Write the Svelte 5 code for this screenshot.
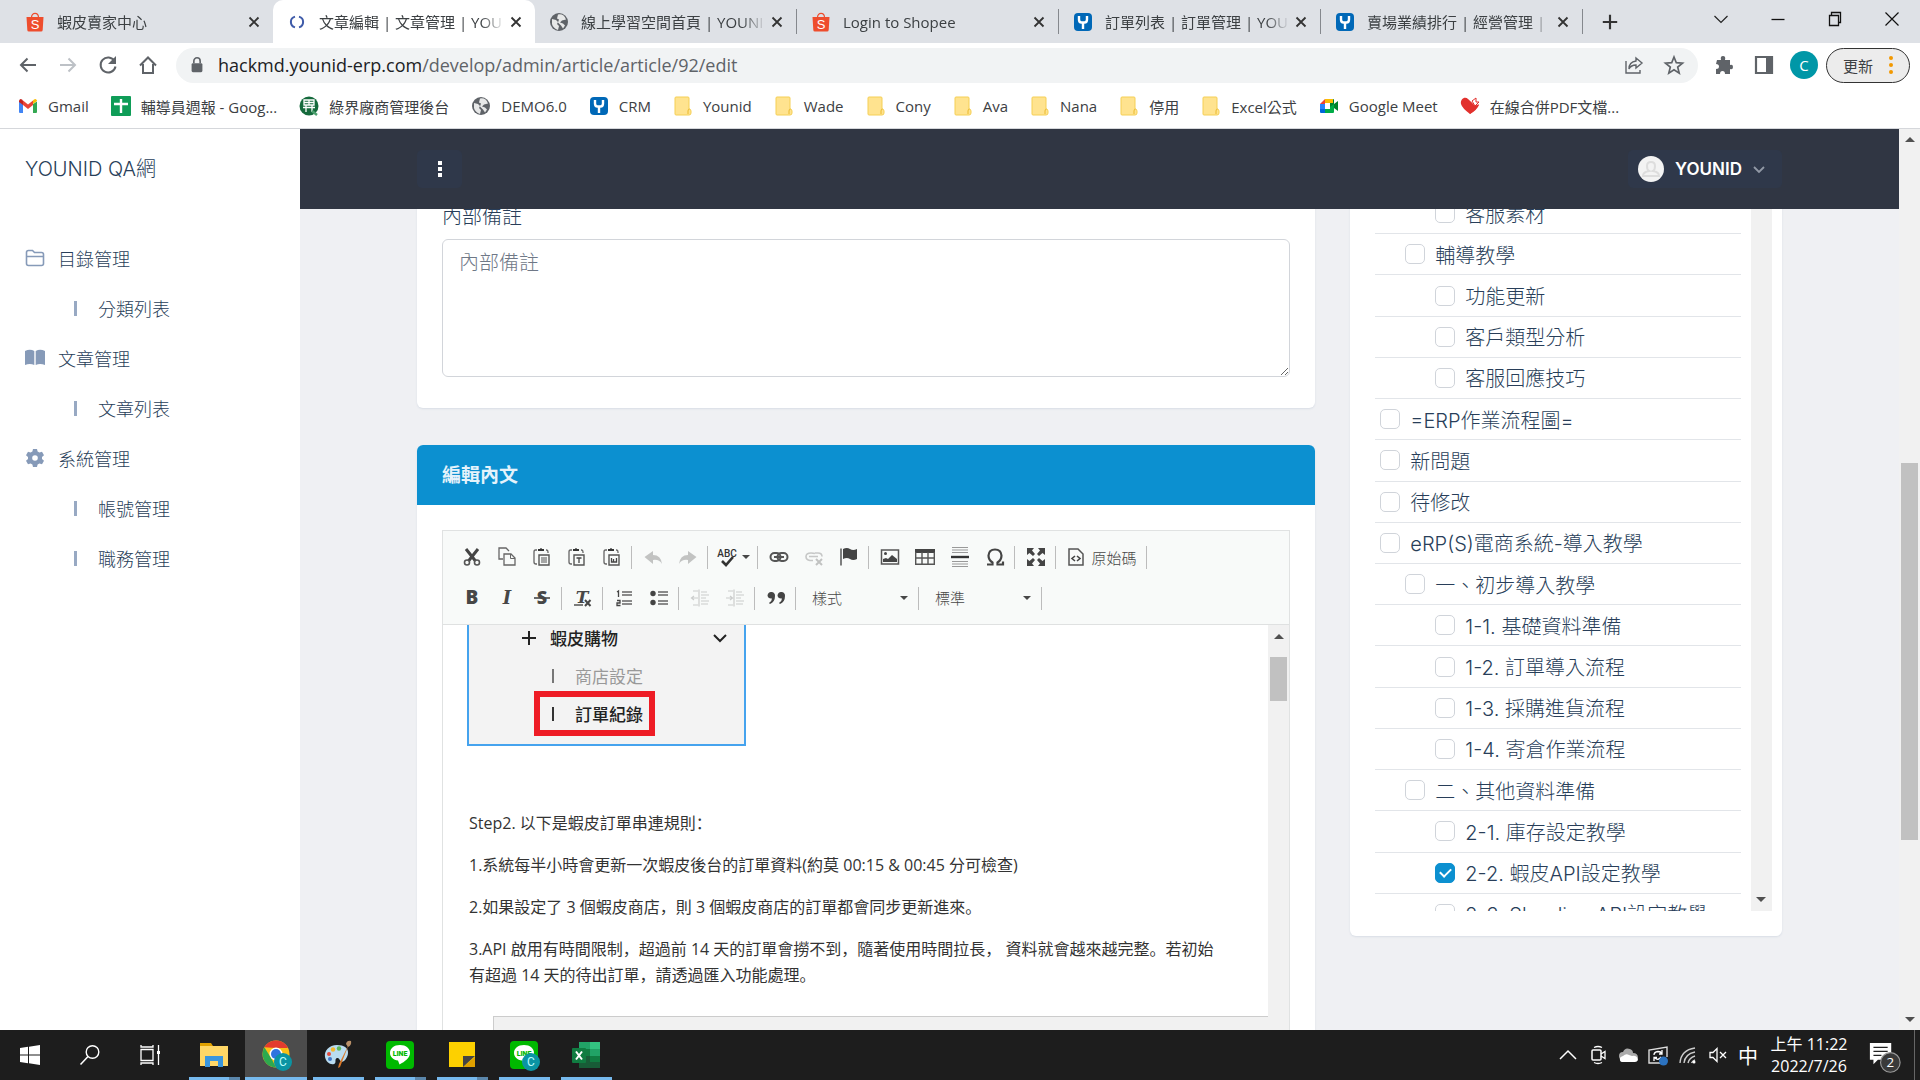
<script lang="ts">
	type Tab = { icon: string; title: string; active?: boolean };
	type TreeItem = { level: number; name: string; checked?: boolean };

	var tabs: Tab[] = [
		{ icon: "shopee", title: "蝦皮賣家中心" },
		{ icon: "loading", title: "文章編輯 | 文章管理 | YOU", active: true },
		{ icon: "globe", title: "線上學習空間首頁 | YOUNI" },
		{ icon: "shopee", title: "Login to Shopee" },
		{ icon: "younid", title: "訂單列表 | 訂單管理 | YOU" },
		{ icon: "younid", title: "賣場業績排行 | 經營管理 | " }
	];

	var bookmarks = [
		{ icon: "gmail", name: "Gmail" },
		{ icon: "sheets", name: "輔導員週報 - Goog..." },
		{ icon: "ecpay", name: "綠界廠商管理後台" },
		{ icon: "globe", name: "DEMO6.0" },
		{ icon: "younid", name: "CRM" },
		{ icon: "folder", name: "Younid" },
		{ icon: "folder", name: "Wade" },
		{ icon: "folder", name: "Cony" },
		{ icon: "folder", name: "Ava" },
		{ icon: "folder", name: "Nana" },
		{ icon: "folder", name: "停用" },
		{ icon: "folder", name: "Excel公式" },
		{ icon: "meet", name: "Google Meet" },
		{ icon: "heart", name: "在線合併PDF文檔..." }
	];

	var menu = [
		{ icon: "menuFolder", name: "目錄管理", children: ["分類列表"] },
		{ icon: "menuBook", name: "文章管理", children: ["文章列表"] },
		{ icon: "menuGear", name: "系統管理", children: ["帳號管理", "職務管理"] }
	];

	var tree: TreeItem[] = [
		{ level: 2, name: "客服素材" },
		{ level: 1, name: "輔導教學" },
		{ level: 2, name: "功能更新" },
		{ level: 2, name: "客戶類型分析" },
		{ level: 2, name: "客服回應技巧" },
		{ level: 0, name: "=ERP作業流程圖=" },
		{ level: 0, name: "新問題" },
		{ level: 0, name: "待修改" },
		{ level: 0, name: "eRP(S)電商系統-導入教學" },
		{ level: 1, name: "一、初步導入教學" },
		{ level: 2, name: "1-1. 基礎資料準備" },
		{ level: 2, name: "1-2. 訂單導入流程" },
		{ level: 2, name: "1-3. 採購進貨流程" },
		{ level: 2, name: "1-4. 寄倉作業流程" },
		{ level: 1, name: "二、其他資料準備" },
		{ level: 2, name: "2-1. 庫存設定教學" },
		{ level: 2, name: "2-2. 蝦皮API設定教學", checked: true },
		{ level: 2, name: "2-3. Shopline API設定教學" }
	];

	var toolsTop = [
		["cut", "copy", "paste", "pasteText", "pasteWord"],
		["undo", "redo"],
		["spell"],
		["link", "unlink", "anchor"],
		["image", "table", "rule", "omega"],
		["maximize"],
		["source"]
	];
	var toolsBottom = [
		["bold", "italic", "strike"],
		["clear"],
		["numbered", "bulleted"],
		["outdent", "indent"],
		["quote"]
	];
	var disabledTools = ["undo", "redo", "unlink", "outdent", "indent"];

	var apps = [
		{ icon: "explorer", name: "檔案總管", stacked: true },
		{ icon: "chrome", name: "Chrome", active: true },
		{ icon: "paint", name: "小畫家" },
		{ icon: "line", name: "LINE", stacked: true },
		{ icon: "notes", name: "自黏便箋", stacked: true },
		{ icon: "lineBadge", name: "LINE C" },
		{ icon: "excel", name: "Excel" }
	];
	var tray = ["trayUp", "trayCam", "trayCloud", "traySync", "trayWifi", "trayMute"];

	var clipboard = '<path d="M5 3H3.500Q2 3 2 5v10q0 2 2 2h1M14 3h.5Q16 3 16 5v1" fill="none" stroke="#666" stroke-width="1.300"/><path d="M6 4V2h2q1-2 2 0h2v2z" fill="#333"/><path d="M7 8h10v10H7z" fill="none" stroke="#555" stroke-width="1.400"/>';
	var lineLogo = '<rect x="1" y="1" width="28" height="28" rx="4" fill="#00b900"/><path d="M15 5C9 5 5 8.500 5 13c0 4 3.500 7 8 7.600l1.500 3.900C20 21.500 25 18 25 13c0-4.500-4-8-10-8z" fill="#fff"/><text x="15" y="16" font-family="Roboto, sans-serif" font-size="7" font-weight="900" text-anchor="middle" fill="#00b900">LINE</text>';
	var badge = '<circle cx="22" cy="22" r="9" fill="#0b94a3"/><text x="22" y="26" font-family="Roboto, sans-serif" font-size="12" text-anchor="middle" fill="#bff">C</text>';

	// inner markup of every icon, drawn on a 20 unit grid unless sized otherwise
	var icons: Record<string, string> = {
		shopee: '<path d="M6.500 5.500C6.500 0 13.500 0 13.500 5.500" fill="none" stroke="#ee4d2d" stroke-width="1.200"/><path d="M1.500 5h17l-.8 13q-.1 1.500-1.600 1.500H3.900q-1.500 0-1.600-1.500z" fill="#ee4d2d"/><text x="10" y="17" font-family="Liberation Sans, sans-serif" font-size="13" text-anchor="middle" fill="#fff">S</text>',
		loading: '<path d="M8 4.600A5.600 5.600 0 0 0 8 15.400M12 4.600a5.600 5.600 0 0 1 0 10.800" fill="none" stroke="#3f5ba9" stroke-width="2"/>',
		globe: '<circle cx="10" cy="10" r="9" fill="#5f6368"/><path d="M3 7l4 1 2 2-1 2 2 2-1 4q-5-2-6-6zM9 2.500q6-1 8 5l-4 1-2 2 3 1 2 2-2 3-2-3-3-3 1-3-2-1z" fill="#fff" opacity=".85"/>',
		younid: '<rect x="1" y="1" width="18" height="18" rx="4" fill="#0068b7"/><path d="M6 4v3.500q0 3 2.500 3h3q2.500 0 2.500-3V4M10 10v7" fill="none" stroke="#fff" stroke-width="2.400"/>',
		gmail: '<path d="M1 5.500V16q0 1 1 1h3V8z" fill="#4285f4"/><path d="M19 5.500V16q0 1-1 1h-3V8z" fill="#34a853"/><path d="M15 8l4-3V4.500q-1-2.500-3-1L15 4.500z" fill="#fbbc04"/><path d="M1 4.500V6l4 3V4.500l-1-1q-2-1.500-3 1z" fill="#c5221f"/><path d="M5 4.500l5 4 5-4V9l-5 4-5-4z" fill="#ea4335"/>',
		sheets: '<rect width="20" height="20" rx="1" fill="#0f9d58"/><path d="M10 3v14M3 8h14" stroke="#fff" stroke-width="2.400"/>',
		ecpay: '<circle cx="10" cy="10" r="9.500" fill="#156a3c"/><path d="M5 4h10v5H5zM10 4v5M5 6.500h10M4 11.500h12M7 9v7M13 9v7" fill="none" stroke="#fff" stroke-width="1.300"/><path d="M13 15l5 4" stroke="#4ca06e" stroke-width="2.500"/>',
		folder: '<path d="M2 2q0-1 1-1h12q1 0 1 1v11q2 0 2 2v2q0 2-2 2H3q-1 0-1-1z" fill="#ffe38f" stroke="#f5cf55"/><path d="M15 18v-3q0-2 1.500-2" fill="none" stroke="#eab92c"/>',
		meet: '<path d="M6 3h8v4h-4v3H6z" fill="#fbbc04"/><path d="M6 3L1 8h5z" fill="#ea4335"/><path d="M1 8h5v5H1z" fill="#2684fc"/><path d="M1 13h5v4H2q-1 0-1-1z" fill="#0066da"/><path d="M6 13h5v-3l4-3v9q0 1-1 1H6z" fill="#00ac47"/><path d="M14 3q1 0 1 1v4l4-3v10l-4-3V8l-4 3V7h3z" fill="#00832d"/><path d="M6 7h5v6H6z" fill="#fff"/>',
		heart: '<path d="M10 18Q2 12 1 8C0 3 5 0 8 3l2 2 5 5 4-2q-1 4-9 10z" fill="#e2312d"/><path d="M12 5l4-3v4h3l-4 4z" fill="#fff" stroke="#e2312d"/><path d="M6 2l5 4 4 4 4-1q-2 5-9 9z" fill="#e2312d"/>',
		back: '<path d="M18 10H3M9.500 3.500L3 10l6.500 6.500" fill="none" stroke="#5f6368" stroke-width="2"/>',
		forward: '<path d="M2 10h15M10.500 3.500L17 10l-6.500 6.500" fill="none" stroke="#bdc1c6" stroke-width="2"/>',
		reload: '<path d="M16.500 6A7.500 7.500 0 1 0 17.500 11.500" fill="none" stroke="#5f6368" stroke-width="2"/><path d="M18 1v8h-8z" fill="#5f6368"/>',
		home: '<path d="M5 9v9h10V9M2 10.500L10 2.500l8 8" fill="none" stroke="#5f6368" stroke-width="2"/>',
		lock: '<rect x="4" y="8" width="12" height="10" rx="1.500" fill="#5f6368"/><path d="M6.500 8V5.500a3.500 3.500 0 0 1 7 0V8" fill="none" stroke="#5f6368" stroke-width="1.800"/>',
		share: '<path d="M2 6v12h14v-3M12 3l6 5-6 5v-3q-5 0-7 4 0-7 7-8z" fill="none" stroke="#5f6368" stroke-width="1.400"/>',
		star: '<path d="M10 2l2.300 5.700 6.200.4-4.800 4 1.500 6L10 14.800 4.800 18.100l1.500-6-4.800-4 6.200-.4z" fill="none" stroke="#5f6368" stroke-width="1.700"/>',
		puzzle: '<path d="M3 5h4q-1-4 2-4t2 4h5v5q3-1 3 2t-3 2v5h-5q0-3-2.500-3T6 19H2v-5q3 0 3-2.500T2 9z" fill="#5f6368"/>',
		panel: '<path d="M2 2h16v16H2z" fill="none" stroke="#5f6368" stroke-width="2.200"/><path d="M12 2h6v16h-6z" fill="#5f6368"/>',
		winDown: '<path d="M3.500 7l6.500 6.500L16.500 7" fill="none" stroke="#222" stroke-width="1.200"/>',
		winMin: '<path d="M3.500 10.500h13" stroke="#111" stroke-width="1.300"/>',
		winMax: '<path d="M4.500 6.500h9v10h-9zM6.500 6V3.500h9v10H14" fill="none" stroke="#111" stroke-width="1.300"/>',
		winClose: '<path d="M3.500 3.500l13 13M16.500 3.500l-13 13" stroke="#111" stroke-width="1.200"/>',
		close: '<path d="M5 5l10 10M15 5L5 15" stroke="#333" stroke-width="2"/>',
		plus: '<path d="M10 2v16M2 10h16" stroke="#333" stroke-width="2.400"/>',
		menuFolder: '<path d="M1.500 4.500q0-2 2-2h4l2 2h7q2 0 2 2v9q0 2-2 2h-13q-2 0-2-2zM1.500 8.500h17" fill="none" stroke="#869ab8" stroke-width="1.600"/>',
		menuBook: '<path d="M0 3q5-2.500 9.300 0v14Q5 15 0 17zM10.700 3Q15 .5 20 3v14q-5-2-9.300 0z" fill="#869ab8"/>',
		menuGear: '<path d="M8 1h4l.6 2.600 1.800 1 2.600-.8 2 3.400-2 1.800v2l2 1.800-2 3.400-2.600-.8-1.800 1L12 19H8l-.6-2.600-1.800-1-2.600.8-2-3.400 2-1.800V9L1 7.200l2-3.400 2.600.8 1.800-1z" fill="#869ab8"/><circle cx="10" cy="10" r="2.800" fill="#fff"/>',
		cut: '<path d="M4 2l9.500 12M16 2L6.500 14" stroke="#444" stroke-width="3"/><circle cx="5" cy="15.500" r="2.500" fill="none" stroke="#555" stroke-width="1.600"/><circle cx="15" cy="15.500" r="2.500" fill="none" stroke="#555" stroke-width="1.600"/>',
		copy: '<path d="M6 12H2V1h7l3 3M7 7h7l4 4v7H7z" fill="none" stroke="#666" stroke-width="1.300"/><path d="M13.500 7v4.500H18" fill="none" stroke="#666"/>',
		paste: clipboard + '<path d="M9 11h6M9 13h6M9 15h6" stroke="#555"/>',
		pasteText: clipboard + '<path d="M9.500 11h5M12 11v5" stroke="#444" stroke-width="1.300"/>',
		pasteWord: clipboard + '<path d="M9.500 11v4h2v-3 3h3v-4" fill="none" stroke="#444" stroke-width="1.300"/>',
		undo: '<path d="M1.500 10L10 4v4q8 0 9 9-3-5-9-4v4z" fill="#474747"/>',
		redo: '<path d="M18.500 10L10 4v4q-8 0-9 9 3-5 9-4v4z" fill="#474747"/>',
		spell: '<text x="10" y="10" font-family="Roboto, sans-serif" font-size="10" font-weight="500" text-anchor="middle" fill="#333">ABC</text><path d="M5 14l4 4 7-8" fill="none" stroke="#333" stroke-width="2.600"/>',
		link: '<rect x="1.500" y="6" width="10" height="8" rx="4" fill="none" stroke="#555" stroke-width="2"/><rect x="8.500" y="6" width="10" height="8" rx="4" fill="none" stroke="#555" stroke-width="2"/><path d="M5 10h10" stroke="#555" stroke-width="2"/>',
		unlink: '<path d="M11 6.500Q10 6 7 6 2 6 2 9.500T6 13.500h3M5 9.500h9M11 6h3q4 0 4 3.500" fill="none" stroke="#555" stroke-width="1.600"/><path d="M12 12l6 6M18 12l-6 6" stroke="#444" stroke-width="2"/>',
		anchor: '<path d="M2 1.500v17" stroke="#555" stroke-width="1.500"/><path d="M4 2q4-2 7 0t7 0v10q-4 2-7 0t-7 0z" fill="#444"/>',
		image: '<path d="M1.500 3h17v14h-17z" fill="none" stroke="#555" stroke-width="1.500"/><circle cx="5.500" cy="6.500" r="1.500" fill="#444"/><path d="M3 15v-3l3-1 2 1 4-4 5 4v3z" fill="#444"/>',
		table: '<path d="M0 2h20v4H0z" fill="#444"/><path d="M.7 5v12.300h18.600V5M0 11h20M7 5v12M13 5v12" fill="none" stroke="#555" stroke-width="1.400"/>',
		rule: '<path d="M2 .5h16M2 3h16M2 5.500h16M2 14.500h16M2 17h16M2 19.500h16" stroke="#999"/><path d="M1 10h18" stroke="#333" stroke-width="2.400"/>',
		omega: '<path d="M2 17.500h5.500v-2Q3.500 13 3.500 8.500 4 2.500 10 2.500t6.500 6q0 4.500-4 7v2H18v-3" fill="none" stroke="#444" stroke-width="2.200"/>',
		maximize: '<path d="M1 1h7L6 3.500 9 7 7 9 3.500 6 1 8zM19 1v7l-2.500-2L13 9l-2-2 3-3.500L12 1zM1 19v-7l2.500 2L7 11l2 2-3 3.500L8 19zM19 19h-7l2-2.500-3-3.500 2-2 3.500 3 2.500-2z" fill="#444"/>',
		source: '<path d="M3 2h9l5 5v11H3z" fill="none" stroke="#555" stroke-width="1.500"/><path d="M9 9l-3 2.500L9 14M11 9l3 2.500-3 2.500" fill="none" stroke="#444" stroke-width="1.600"/>',
		bold: '<text x="10" y="16" font-family="Open Sans, sans-serif" font-size="19" font-weight="800" text-anchor="middle" fill="#474747">B</text>',
		italic: '<text x="10" y="16" font-family="DejaVu Serif, serif" font-size="18" font-style="italic" font-weight="700" text-anchor="middle" fill="#474747">I</text>',
		strike: '<text x="10" y="16" font-family="Open Sans, sans-serif" font-size="18" font-weight="800" text-anchor="middle" fill="#474747">S</text><path d="M2 10h16" stroke="#474747" stroke-width="1.600"/>',
		clear: '<text x="9" y="15" font-family="DejaVu Serif, serif" font-size="17" font-style="italic" font-weight="700" text-anchor="middle" fill="#474747">T</text><path d="M1 17h9" stroke="#474747" stroke-width="1.400"/><path d="M12 12l5.500 6M17.500 12L12 18" stroke="#474747" stroke-width="2"/>',
		numbered: '<path d="M3 4l1.500-1v6M3 12.500h3v2.500H3v2.500h3.500" fill="none" stroke="#444" stroke-width="1.300"/><path d="M8 4h10M8 7h10M8 13h10M8 16h10" stroke="#666" stroke-width="1.300"/>',
		bulleted: '<circle cx="4" cy="5.500" r="2.700" fill="#444"/><circle cx="4" cy="14.500" r="2.700" fill="#444"/><path d="M9 4h10M9 7h10M9 13h10M9 16h10" stroke="#666" stroke-width="1.300"/>',
		outdent: '<path d="M3 3h5M3 17h5M1 10h7M4 8l-2.500 2L4 12M9 1.500v17M11 4h6M11 7h8M11 10h5M11 13h8M11 16h7" fill="none" stroke="#666" stroke-width="1.200"/>',
		indent: '<path d="M3 3h5M3 17h5M1 10h7M5 8l2.500 2L5 12M9 1.500v17M11 4h6M11 7h8M11 10h5M11 13h8M11 16h7" fill="none" stroke="#666" stroke-width="1.200"/>',
		quote: '<path d="M5 4a3.500 3.500 0 0 1 4 4q0 6-5 8l-1-1q3-2 3-4.500Q2 11 1.500 7.500 2 4 5 4zM15 4a3.500 3.500 0 0 1 4 4q0 6-5 8l-1-1q3-2 3-4.500-4 .5-4.500-3Q12 4 15 4z" fill="#444"/>',
		windows: '<path d="M0 3l8-1.200v7.700H0zM9 1.700L20 0v9.500H9zM0 10.500h8v7.700L0 17zM9 10.500h11V20L9 18.300z" fill="#fff"/>',
		search: '<circle cx="12.500" cy="7" r="6.300" fill="none" stroke="#fff" stroke-width="1.400"/><path d="M8 11.500L.5 19.500" stroke="#fff" stroke-width="1.500"/>',
		taskview: '<path d="M1 4.500h12v11H1zM1 0v2h12V0M1 20v-2h12v2M18.500 0v20" fill="none" stroke="#fff" stroke-width="1.300"/><path d="M17 6h3v3h-3z" fill="#fff"/>',
		explorer: '<path d="M1 3h11l2 3h-13z" fill="#e0a100"/><path d="M1 6h28v20H1z" fill="#ffd766"/><path d="M6 27V16h18v11h-5v-6h-8v6z" fill="#3a96dd"/>',
		chrome: '<circle cx="15" cy="14" r="13.500" fill="#fbc116"/><path d="M3.300 7.300A13.500 13.500 0 0 1 27 8H15z" fill="#e33b2e"/><path d="M3.300 7.300l7 11 4.700 9.200A13.500 13.500 0 0 1 3.300 7.300z" fill="#2da94f"/><circle cx="15" cy="14" r="6.500" fill="#fff"/><circle cx="15" cy="14" r="5" fill="#2f74e0"/>' + badge,
		paint: '<path d="M14 5C6 5 1 11 2 17c1 5 5 8 9 7 3-1 0-5 3-6s3 6 7 3c5-4 8-16-7-16z" fill="#b9dcf0"/><circle cx="6" cy="14" r="2" fill="#e34b3d"/><circle cx="10" cy="9.500" r="2.200" fill="#f5b92f"/><circle cx="16" cy="8.500" r="2.200" fill="#5db85b"/><circle cx="7" cy="19" r="2" fill="#4377c8"/><path d="M26 4L17 27l-2 1 1-4z" fill="#d97828"/><path d="M23 4q1-4 5-3 1 4-3 6z" fill="#b99068"/>',
		line: lineLogo,
		lineBadge: lineLogo + badge,
		notes: '<path d="M2 2h26v16l-9 9H2z" fill="#fdd000"/><path d="M28 17v10H16z" fill="#e0a000"/><path d="M16 27V16h12z" fill="#444"/>',
		excel: '<path d="M8 2h11v7H8z" fill="#21a366"/><path d="M19 2h10v7H19z" fill="#33c481"/><path d="M8 9h11v7H8z" fill="#107c41"/><path d="M19 9h10v7H19z" fill="#21a366"/><path d="M8 16h21v12H8z" fill="#185c37"/><path d="M19 16h10v6H19z" fill="#107c41"/><rect x="1" y="8" width="14" height="15" rx="1" fill="#107c41"/><path d="M5 11.500l6 8M11 11.500l-6 8" stroke="#fff" stroke-width="2"/>',
		trayUp: '<path d="M2 14l8-8 8 8" fill="none" stroke="#fff" stroke-width="1.500"/>',
		trayCam: '<rect x="4" y="5" width="9" height="10" rx="1" fill="none" stroke="#fff" stroke-width="1.500"/><path d="M13 9l4-2.500v7L13 11M6 2.500Q10 .5 14 2.500M6 17.500q4 2 8 0" fill="none" stroke="#fff" stroke-width="1.300"/>',
		trayCloud: '<path d="M1 11q0-4 4-4 2-5 7-3 3 1 3 4 5 0 5 5l-1 2H4q-3-1-3-4z" fill="#aaa"/><path d="M2 15q-1-3 3-4 3-3 6-1l3 1q5-1 6 4-1 2-3 2H5q-3 0-3-2z" fill="#fff"/>',
		traySync: '<path d="M13 18H1V5l18-3v10" fill="none" stroke="#ddd" stroke-width="1.400"/><path d="M6 10q0-3 4-3.500 3 0 3.500 2M14 5v4h-3M13 12q-3 4-6 1M6 16v-3.500h3" fill="none" stroke="#fff" stroke-width="1.300"/><circle cx="15.500" cy="16" r="4.500" fill="#2c73c0"/>',
		trayWifi: '<path d="M2 18Q3 5 17 3M6 18q1-9 11-11M10 18q1-5 7-7M13.500 18q1-2 3.500-3" fill="none" stroke="#ccc" stroke-width="1.400"/><circle cx="16" cy="17" r="1.500" fill="#fff"/>',
		trayMute: '<path d="M2 7.500h3l4-4v13l-4-4H2zM12 7l6 6M18 7l-6 6" fill="none" stroke="#fff" stroke-width="1.300"/>',
		notice: '<path d="M1 1h24v19H10l-5 5v-5H1z" fill="#fff"/><path d="M5 6h16M5 10.500h16M5 15h9" stroke="#222" stroke-width="1.400"/><circle cx="24" cy="23" r="11" fill="#3a3a3a" stroke="#999" stroke-width="1.300"/><text x="24" y="28" font-family="Open Sans, sans-serif" font-size="15" text-anchor="middle" fill="#fff">2</text>'
	};
</script>

{#snippet icon(name: string, size = 20, grid = 20)}
	<svg class="icon" width={size} height={size} viewBox="0 0 {grid} {grid}" aria-hidden="true">{@html icons[name]}</svg>
{/snippet}

{#snippet arrow(dir: string)}
	<span class="arrow {dir}"></span>
{/snippet}

{#snippet tools(groups: string[][])}
	{#each groups as group}
		<div class="toolGroup">
			{#each group as tool}
				<button class="tool" class:wide={tool == "spell"} class:source={tool == "source"} disabled={disabledTools.includes(tool)} aria-label={tool}>
					{@render icon(tool)}
					{#if tool == "spell"}{@render arrow("small")}{/if}
					{#if tool == "source"}原始碼{/if}
				</button>
			{/each}
		</div>
	{/each}
{/snippet}

<div class="screen">
	<header class="tabStrip">
		{#each tabs as tab}
			<div class="tab" class:active={tab.active}>
				{@render icon(tab.icon)}
				<span class="tabTitle">{tab.title}</span>
				<button aria-label="close tab">{@render icon("close", 18)}</button>
			</div>
		{/each}
		<button class="newTab" aria-label="new tab">{@render icon("plus", 18)}</button>
		<div class="windowControls">
			{#each ["winDown", "winMin", "winMax", "winClose"] as control}
				<button aria-label={control}>{@render icon(control)}</button>
			{/each}
		</div>
	</header>

	<div class="navBar">
		{#each ["back", "forward", "reload", "home"] as nav}
			<button class="navButton" aria-label={nav}>{@render icon(nav)}</button>
		{/each}
		<div class="omnibox">
			{@render icon("lock", 18)}
			<div class="url"><span>hackmd.younid-erp.com</span>/develop/admin/article/article/92/edit</div>
			<button class="navButton" aria-label="share">{@render icon("share")}</button>
			<button class="navButton" aria-label="star">{@render icon("star")}</button>
		</div>
		<button class="navButton" aria-label="extensions">{@render icon("puzzle")}</button>
		<button class="navButton" aria-label="side panel">{@render icon("panel")}</button>
		<button class="profile">C</button>
		<button class="update">更新<span class="dots"><i></i><i></i><i></i></span></button>
	</div>

	<nav class="bookmarks">
		{#each bookmarks as mark}
			<a href="#top">{@render icon(mark.icon)}{mark.name}</a>
		{/each}
	</nav>

	<div class="page">
		<aside class="sidebar">
			<a class="brand" href="#top">YOUNID QA網</a>
			<ul>
				{#each menu as item}
					<li><a href="#top">{@render icon(item.icon)}{item.name}</a></li>
					{#each item.children as child}
						<li class="child"><a href="#top"><i></i>{child}</a></li>
					{/each}
				{/each}
			</ul>
		</aside>

		<div class="main">
			<div class="topBar">
				<button class="kebab" aria-label="menu"><i></i><i></i><i></i></button>
				<button class="user">
					<svg class="icon" width="26" height="26" viewBox="0 0 26 26"><circle cx="13" cy="13" r="13" fill="#f3f3f3" /><path d="M9 10q0-4 4-4t4 4q0 4-2 5 6 1 6 5H5q0-4 6-5-2-1-2-5z" fill="none" stroke="#ddd" stroke-width="2" /></svg>
					YOUNID
					<svg class="icon" width="12" height="12" viewBox="0 0 12 12"><path d="M1 4l5 5 5-5" fill="none" stroke="#9299a6" stroke-width="1.800" /></svg>
				</button>
			</div>

			<div class="scroller">
				<div class="content">
					<div class="leftColumn">
						<section class="card noteCard">
							<label for="note">內部備註</label>
							<textarea id="note" placeholder="內部備註"></textarea>
						</section>

						<section class="card">
							<h2>編輯內文</h2>
							<div class="editor">
								<div class="toolbar">
									<div class="toolRow">{@render tools(toolsTop)}</div>
									<div class="toolRow">
										{@render tools(toolsBottom)}
										<div class="toolGroup combo">
											<select aria-label="樣式"><option>樣式</option></select>
											{@render arrow("small")}
										</div>
										<div class="toolGroup combo">
											<select aria-label="標準"><option>標準</option></select>
											{@render arrow("small")}
										</div>
									</div>
								</div>
								<div class="editArea">
									<div class="article">
										<div class="figure">
											<div class="figureHead">
												<svg class="icon" width="16" height="16" viewBox="0 0 16 16"><path d="M8 1v14M1 8h14" stroke="#222" stroke-width="2" /></svg>
												<span>蝦皮購物</span>
												<svg class="icon" width="14" height="14" viewBox="0 0 14 14"><path d="M1 4l6 6 6-6" fill="none" stroke="#222" stroke-width="2" /></svg>
											</div>
											<div class="figureRow dim"><i></i>商店設定</div>
											<div class="figureRow marked"><i></i>訂單紀錄</div>
										</div>
										<p>Step2. 以下是蝦皮訂單串連規則：</p>
										<p>1.系統每半小時會更新一次蝦皮後台的訂單資料(約莫 00:15 &amp; 00:45 分可檢查)</p>
										<p>2.如果設定了 3 個蝦皮商店，則 3 個蝦皮商店的訂單都會同步更新進來。</p>
										<p>3.API 啟用有時間限制，超過前 14 天的訂單會撈不到，隨著使用時間拉長， 資料就會越來越完整。若初始有超過 14 天的待出訂單，請透過匯入功能處理。</p>
										<div class="nextBlock"></div>
									</div>
									<div class="scrollbar">
										{@render arrow("up")}
										<span class="thumb"></span>
									</div>
								</div>
							</div>
						</section>
					</div>

					<section class="card treeCard">
						<div class="treeBox">
							<ul class="tree">
								{#each tree as item}
									<li>
										<label class="level{item.level}"><input type="checkbox" checked={item.checked} />{item.name}</label>
									</li>
								{/each}
							</ul>
							<div class="scrollbar end">{@render arrow("down")}</div>
						</div>
					</section>
				</div>
			</div>
		</div>

		<div class="scrollbar pageScroll">
			{@render arrow("up")}
			<span class="track"><span class="thumb"></span></span>
			{@render arrow("down")}
		</div>
	</div>

	<footer class="taskbar">
		{#each ["windows", "search", "taskview"] as name}
			<button class="system" aria-label={name}>{@render icon(name)}</button>
		{/each}
		<div class="apps">
			{#each apps as app}
				<button class="app" class:current={app.active} class:stacked={app.stacked} aria-label={app.name}>{@render icon(app.icon, 30, 30)}</button>
			{/each}
		</div>
		<div class="tray">
			{#each tray as name}
				<button aria-label={name}>{@render icon(name)}</button>
			{/each}
			<button class="ime">中</button>
			<div class="clock"><span>上午 11:22</span><span>2022/7/26</span></div>
			<button class="notice" aria-label="notifications">{@render icon("notice", 32, 36)}</button>
		</div>
	</footer>
</div>

<style>
	:global(body) {
		font-family: "Open Sans", "Noto Sans CJK TC", sans-serif;
		font-weight: 300;
		color: #283e59;
	}

	.screen {
		display: flex;
		flex-direction: column;
		height: 100vh;
		overflow: hidden;
		background: white;
	}

	.screen :global(*) {
		box-sizing: border-box;
	}

	button {
		display: flex;
		align-items: center;
		justify-content: center;
		padding: 0;
		border: 0;
		background: none;
		font: inherit;
		color: inherit;
	}

	a {
		color: inherit;
		text-decoration: none;
	}

	ul {
		margin: 0;
		padding: 0;
		list-style: none;
	}

	.icon {
		display: block;
		flex: none;
		overflow: visible;
	}

	.arrow {
		width: 0;
		border: 5px solid transparent;
	}

	.arrow.up {
		border-top: 0;
		border-bottom-color: #505050;
	}

	.arrow.down {
		border-bottom: 0;
		border-top-color: #505050;
	}

	.arrow.small {
		border-width: 4px 4px 0;
		border-top-color: #474747;
	}

	/* browser */
	.tabStrip {
		display: flex;
		align-items: center;
		height: 43px;
		padding-left: 11px;
		background: #dee1e6;
		color: #3c4043;
		font-size: 15px;
		font-weight: 400;
	}

	.tab {
		display: flex;
		align-items: center;
		flex: 0 1 262px;
		min-width: 0;
		height: 43px;
		padding: 0 10px 0 14px;
	}

	.tab:not(.active):not(:first-child) {
		border-right: 1px solid #85888d;
		height: 25px;
	}

	.tab.active {
		background: white;
		border-radius: 10px 10px 0 0;
	}

	.tabTitle {
		flex: 1;
		margin: 0 2px 0 12px;
		overflow: hidden;
		white-space: nowrap;
		line-height: 24px;
		mask-image: linear-gradient(to left, transparent, black 24px);
	}

	.newTab {
		width: 54px;
	}

	.windowControls {
		display: flex;
		align-self: flex-start;
		margin-left: auto;
	}

	.windowControls button {
		width: 57px;
		height: 37px;
	}

	.navBar {
		display: flex;
		align-items: center;
		height: 44px;
		padding: 0 10px 0 8px;
		color: #3c4043;
	}

	.navButton {
		width: 40px;
		height: 34px;
	}

	.omnibox {
		display: flex;
		align-items: center;
		flex: 1;
		height: 35px;
		margin: 0 6px 0 8px;
		padding: 0 4px 0 12px;
		border-radius: 18px;
		background: #f1f3f4;
	}

	.url {
		flex: 1;
		margin-left: 12px;
		font-size: 18px;
		font-weight: 400;
		color: #5f6368;
	}

	.url span {
		color: #202124;
	}

	.profile {
		width: 28px;
		height: 28px;
		margin: 0 8px 0 6px;
		border-radius: 50%;
		background: #0097a7;
		color: white;
		font-size: 15px;
		font-weight: 400;
	}

	.update {
		gap: 16px;
		width: 84px;
		height: 35px;
		border: 1px solid #333;
		border-radius: 18px;
		background: #ececec;
		font-size: 15px;
		font-weight: 400;
	}

	.dots {
		display: grid;
		gap: 3px;
	}

	.dots i {
		width: 4px;
		height: 4px;
		border-radius: 50%;
		background: #f29900;
	}

	.bookmarks {
		display: flex;
		align-items: center;
		gap: 22px;
		height: 42px;
		padding: 0 18px 3px;
		border-bottom: 1px solid #d5d7db;
		color: #3c4043;
		font-size: 15px;
		font-weight: 400;
		white-space: nowrap;
	}

	.bookmarks a {
		display: flex;
		align-items: center;
		gap: 10px;
	}

	/* page */
	.page {
		display: flex;
		flex: 1;
		min-height: 0;
	}

	.sidebar {
		flex: 0 0 300px;
		padding: 25px;
		font-family: Inter, "Noto Sans CJK TC", sans-serif;
		font-size: 18px;
	}

	.brand {
		display: block;
		margin-bottom: 49px;
		font-size: 20px;
		line-height: 30px;
	}

	.sidebar li a {
		display: flex;
		align-items: center;
		gap: 13px;
		height: 50px;
	}

	.sidebar li.child a {
		gap: 21px;
		padding-left: 49px;
	}

	.child i {
		width: 3px;
		height: 15px;
		background: #98a9c3;
	}

	.main {
		display: flex;
		flex-direction: column;
		flex: 1;
		min-width: 0;
		background: #eff0f3;
		font-family: Inter, "Noto Sans CJK TC", sans-serif;
	}

	.topBar {
		z-index: 1;
		display: flex;
		align-items: center;
		justify-content: space-between;
		flex: 0 0 80px;
		padding: 0 117px;
		background: #303643;
	}

	.kebab {
		flex-direction: column;
		gap: 2px;
		width: 45px;
		height: 38px;
		border-radius: 5px;
		background: #2f384a;
	}

	.kebab i {
		width: 4px;
		height: 4px;
		background: white;
	}

	.user {
		gap: 11px;
		height: 38px;
		padding: 0 17px 0 10px;
		border-radius: 5px;
		background: #2f384a;
		color: white;
		font-size: 17px;
		font-weight: 600;
	}

	.scroller {
		flex: 1;
		min-height: 0;
		overflow: hidden;
	}

	.content {
		display: grid;
		grid-template-columns: repeat(12, 1fr);
		align-items: start;
		gap: 35px;
		margin-top: -16px;
		padding: 0 117px;
	}

	.leftColumn {
		grid-column: span 8;
		display: grid;
		gap: 37px;
	}

	.card {
		border-radius: 6px;
		background: white;
		box-shadow: 0 1px 2px #d8dde5;
		overflow: hidden;
	}

	.noteCard {
		padding: 8px 25px 31px;
		font-size: 20px;
	}

	.noteCard label {
		display: block;
		height: 38px;
		line-height: 32px;
	}

	textarea {
		display: block;
		width: 100%;
		height: 138px;
		padding: 8px 16px;
		border: 1px solid #d2d5da;
		border-radius: 6px;
		font: inherit;
		line-height: 30px;
	}

	textarea::placeholder {
		color: #6f7887;
	}

	h2 {
		margin: 0;
		padding: 1px 25px 0;
		background: #0c90d0;
		color: #e4f3fb;
		font-size: 19px;
		line-height: 59px;
	}

	.editor {
		margin: 25px;
		border: 1px solid #e0e2e2;
		font-family: "Open Sans", "Noto Sans CJK TC", sans-serif;
		color: #333;
	}

	.toolbar {
		display: grid;
		gap: 5px;
		padding: 8px 11px;
		border-bottom: 1px solid #dfe1e1;
		background: #f8faf9;
	}

	.toolRow {
		display: flex;
		align-items: center;
		height: 36px;
	}

	.toolGroup {
		display: flex;
		align-items: center;
		height: 23px;
		margin-right: 3px;
		padding-right: 2px;
		border-right: 1px solid #bcbcbc;
	}

	.tool {
		width: 35px;
		color: #474747;
		font-size: 15px;
	}

	.tool:disabled {
		opacity: 0.3;
	}

	.tool.wide {
		gap: 5px;
		width: 44px;
	}

	.tool.source {
		gap: 5px;
		width: 85px;
	}

	.combo {
		width: 120px;
		padding: 0 10px 0 13px;
	}

	select {
		flex: 1;
		padding: 0;
		border: 0;
		background: none;
		appearance: none;
		font: inherit;
		font-size: 15px;
		color: #474747;
	}

	.editArea {
		display: flex;
		height: 440px;
	}

	.article {
		flex: 1;
		padding: 0 46px 0 26px;
		font-family: "Open Sans", "Noto Sans CJK SC", sans-serif;
		font-size: 16px;
		font-weight: 400;
		line-height: 26px;
	}

	.article p {
		margin: 0 0 16px;
	}

	.figure {
		display: flex;
		flex-direction: column;
		width: 279px;
		height: 121px;
		margin: 0 0 64px -2px;
		padding-left: 65px;
		border: 2px solid #45a3ee;
		border-top: 0;
		background: #f3f3f3;
		color: #222;
		font-family: "Noto Sans CJK TC", sans-serif;
		font-size: 17px;
		font-weight: 500;
	}

	.figureHead {
		display: flex;
		align-items: center;
		gap: 13px;
		height: 26px;
		margin: 0 17px 10px -13px;
	}

	.figureHead span {
		flex: 1;
	}

	.figureRow {
		display: flex;
		align-items: center;
		gap: 21px;
		height: 30px;
		padding-left: 18px;
	}

	.figureRow i {
		width: 2px;
		height: 14px;
		background: #333;
	}

	.figureRow.dim {
		color: #999;
		font-weight: 400;
	}

	.figureRow.dim i {
		background: #777;
	}

	.figureRow.marked {
		width: 121px;
		height: 45px;
		padding-left: 12px;
		border: 6px solid #ee1c25;
	}

	.nextBlock {
		height: 60px;
		margin: 28px -46px 0 24px;
		border: 1px solid #ccc;
		border-right: 0;
		background: #f1f1f1;
	}

	.scrollbar {
		display: flex;
		flex-direction: column;
		align-items: center;
		flex: 0 0 21px;
		padding: 9px 0;
		background: #f1f1f1;
	}

	.scrollbar.end {
		justify-content: flex-end;
	}

	.thumb {
		width: 17px;
		height: 44px;
		margin-top: 18px;
		background: #c1c1c1;
	}

	.pageScroll {
		padding: 8px 0;
	}

	.track {
		display: grid;
		grid-template-rows: 321fr 377fr 177fr;
		flex: 1;
	}

	.track .thumb {
		grid-row: 2;
		height: auto;
		margin: 0;
	}

	.treeCard {
		grid-column: span 4;
		padding: 0 10px 25px 25px;
	}

	.treeBox {
		display: flex;
		gap: 10px;
		height: 718px;
		overflow: hidden;
	}

	.tree {
		display: grid;
		grid-auto-rows: 1fr;
		flex: 1;
		height: 742px;
		font-size: 20px;
	}

	.tree li {
		display: flex;
		align-items: center;
		border-bottom: 1px solid #e2e5e9;
		white-space: nowrap;
	}

	.tree label {
		display: flex;
		align-items: center;
		gap: 10px;
		padding-left: 5px;
	}

	.tree .level1 {
		padding-left: 30px;
	}

	.tree .level2 {
		padding-left: 60px;
	}

	input {
		display: flex;
		align-items: center;
		justify-content: center;
		width: 20px;
		height: 20px;
		margin: 0;
		border: 1px solid #d0d4da;
		border-radius: 5px;
		background: white;
		appearance: none;
	}

	input:checked {
		border-color: #0c90d0;
		background: #0c90d0;
	}

	input:checked::after {
		content: "";
		width: 5px;
		height: 9px;
		margin-bottom: 3px;
		border: solid white;
		border-width: 0 2px 2px 0;
		rotate: 45deg;
	}

	/* windows taskbar */
	.taskbar {
		display: flex;
		flex: 0 0 50px;
		background: #1d1d1d;
		color: white;
		font-size: 16px;
		font-weight: 400;
	}

	.system {
		width: 60px;
	}

	.apps {
		display: flex;
		margin-left: 3px;
	}

	.app {
		position: relative;
		width: 62px;
	}

	.app.current {
		background: #4c4c4c;
	}

	.app::after {
		content: "";
		position: absolute;
		bottom: 0;
		left: 6px;
		right: 5px;
		height: 3px;
		background: #76b9ed;
	}

	.app.current::after {
		left: 0;
		right: 0;
	}

	.app.stacked::after {
		background: linear-gradient(to right, #76b9ed 40px, #5b87ab 40px);
	}

	.tray {
		display: flex;
		margin-left: auto;
		padding-right: 5px;
	}

	.tray button {
		width: 30px;
	}

	.tray .ime {
		font-size: 20px;
	}

	.clock {
		display: flex;
		flex-direction: column;
		align-items: center;
		justify-content: center;
		width: 92px;
		line-height: 22px;
	}

	.tray .notice {
		width: 60px;
		padding-top: 6px;
		border-right: 1px solid #666;
	}
</style>
